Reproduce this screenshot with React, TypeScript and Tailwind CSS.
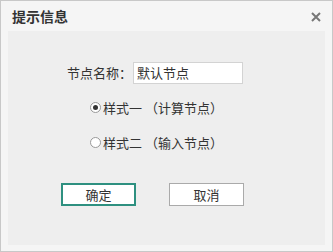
import React from 'react';

const font = { fontFamily: '"Noto Sans CJK SC", "Noto Sans", sans-serif' };

export default function App() {
  return (
    <div
      className="w-[333px] h-[252px] bg-[#f5f5f5] border border-[#c8c8c8] flex flex-col text-[#333333]"
      style={font}
    >
      <div className="h-[30px] flex items-center justify-between pl-[11px] pr-[11px] shrink-0">
        <span className="text-[14px] font-bold text-[#333333] leading-none">提示信息</span>
        <svg width="10" height="10" viewBox="0 0 10 10" className="mt-[1px]">
          <path d="M1 1 L9 9 M9 1 L1 9" stroke="#777777" strokeWidth="2" />
        </svg>
      </div>
      <div className="flex-1 mx-[7px] mb-[6px] bg-[#eeeeee] flex flex-col">
        <div className="flex items-center mt-[31px] pl-[59px] text-[13px]">
          <span className="w-[66px]">节点名称：</span>
          <div className="w-[110px] h-[22px] bg-white border border-[#d3d3d3] flex items-center pl-[3px] text-[#333333]">
            默认节点
          </div>
        </div>
        <div className="flex flex-col gap-[24px] mt-[18px] pl-[82px] text-[13px]">
          <label className="flex items-center gap-[2px] h-[11px]">
            <span className="w-[11px] h-[11px] rounded-full border border-[#999999] bg-white flex items-center justify-center">
              <span className="w-[5px] h-[5px] rounded-full bg-[#333333]" />
            </span>
            <span>样式一 （计算节点）</span>
          </label>
          <label className="flex items-center gap-[2px] h-[11px]">
            <span className="w-[11px] h-[11px] rounded-full border border-[#999999] bg-white" />
            <span>样式二 （输入节点）</span>
          </label>
        </div>
        <div className="flex mt-[35px] pl-[53px] gap-[33px] text-[13px]">
          <button className="w-[75px] h-[23px] bg-white border-2 border-[#2e9080] flex items-center justify-center">
            确定
          </button>
          <button className="w-[75px] h-[23px] bg-white border border-[#aaaaaa] flex items-center justify-center">
            取消
          </button>
        </div>
      </div>
    </div>
  );
}
